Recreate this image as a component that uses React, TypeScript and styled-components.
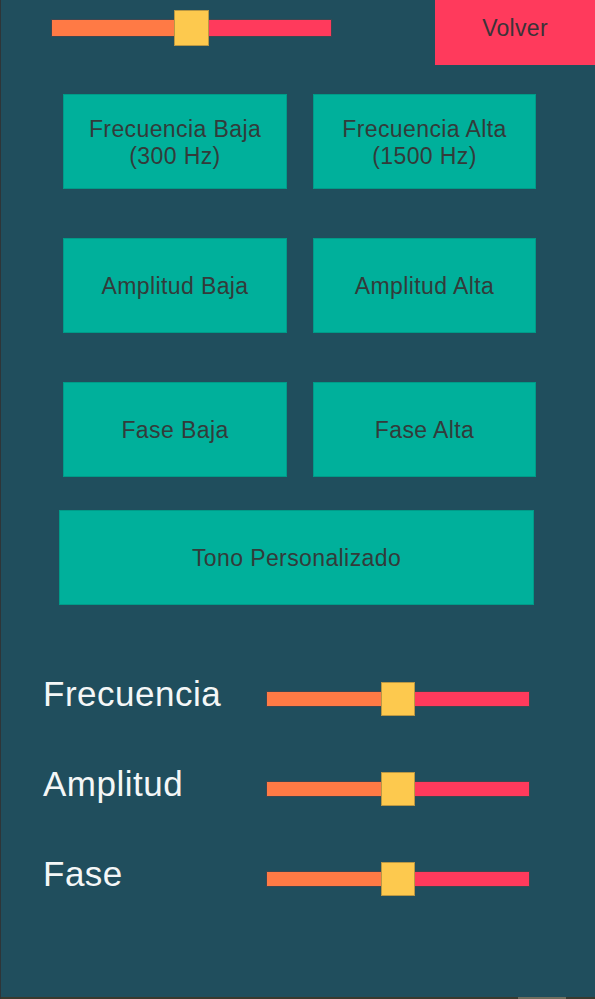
import React from "react";
import styled, { createGlobalStyle } from "styled-components";

const GlobalStyle = createGlobalStyle`
  html, body {
    margin: 0;
    padding: 0;
    background: #204e5d;
  }
  * { box-sizing: border-box; }
`;

const Screen = styled.div`
  width: 595px;
  height: 999px;
  display: flex;
  flex-direction: column;
  background: #204e5d;
  border-left: 1px solid #2e3538;
  font-family: "Liberation Sans", Arial, sans-serif;
  overflow: hidden;
`;

const TopBar = styled.div`
  display: flex;
  justify-content: space-between;
  align-items: flex-start;
  height: 65px;
`;

const TopSliderArea = styled.div`
  padding: 10px 0 0 50px;
`;

const BackButton = styled.button`
  width: 160px;
  height: 65px;
  border: none;
  margin: 0;
  background: #ff3a5c;
  color: #3b3338;
  font-family: "Liberation Sans", Arial, sans-serif;
  font-size: 23px;
  letter-spacing: 0.3px;
  padding: 0 0 8px 0;
  display: flex;
  align-items: center;
  justify-content: center;
`;

const SliderBox = styled.div<{ $w: number; $h: number }>`
  position: relative;
  width: ${(p) => p.$w}px;
  height: ${(p) => p.$h}px;
  display: flex;
  align-items: center;
`;

const Track = styled.div<{ $th: number }>`
  width: 100%;
  height: ${(p) => p.$th}px;
  display: flex;
  border: 1px solid rgba(120, 60, 60, 0.35);
`;

const Fill = styled.div`
  background: #ff7a45;
`;

const Rest = styled.div`
  flex: 1;
  background: #ff3a5c;
`;

const Handle = styled.div<{ $hw: number }>`
  position: absolute;
  top: 0;
  bottom: 0;
  width: ${(p) => p.$hw}px;
  background: #fdc94e;
  border: 1px solid rgba(130, 110, 60, 0.55);
`;

type SliderProps = { width: number; height: number; trackHeight: number; handleWidth: number; value: number };

const Slider = ({ width, height, trackHeight, handleWidth, value }: SliderProps) => {
  const center = width * value;
  return (
    <SliderBox $w={width} $h={height}>
      <Track $th={trackHeight}>
        <Fill style={{ width: `${value * 100}%` }} />
        <Rest />
      </Track>
      <Handle $hw={handleWidth} style={{ left: `${center - handleWidth / 2}px` }} />
    </SliderBox>
  );
};

const ButtonGrid = styled.div`
  margin: 29px 0 0 62px;
  display: grid;
  grid-template-columns: 224px 223px;
  grid-auto-rows: 95px;
  column-gap: 26px;
  row-gap: 49px;
`;

const ToneButton = styled.button<{ $wide?: boolean }>`
  margin: 0;
  padding: 2px 0 0 0;
  width: ${(p) => (p.$wide ? "475px" : "100%")};
  height: 95px;
  background: #00b09b;
  border: 1px solid rgba(0, 90, 80, 0.25);
  color: #333b3a;
  font-family: "Liberation Sans", Arial, sans-serif;
  font-size: 23px;
  letter-spacing: 0.4px;
  line-height: 27px;
  text-align: center;
  display: flex;
  align-items: center;
  justify-content: center;
`;

const WideRow = styled.div`
  margin: 33px 0 0 58px;
`;

const Controls = styled.div`
  flex: 1;
  display: flex;
  flex-direction: column;
  gap: 56px;
  padding: 72px 0 0 42px;
`;

const ControlRow = styled.div`
  display: grid;
  grid-template-columns: 223px 264px;
  align-items: center;
  height: 34px;
`;

const ControlLabel = styled.span`
  color: #f4f7f7;
  font-size: 35px;
  line-height: 34px;
  letter-spacing: 0.5px;
  margin-bottom: 9px;
`;

const BottomEdge = styled.div`
  height: 2px;
  background: #3a3a2e;
  display: flex;
`;

const EdgeThumb = styled.div`
  margin-left: 517px;
  width: 48px;
  background: #706d5d;
`;

export default function App() {
  const buttons = [
    ["Frecuencia Baja", "(300 Hz)"],
    ["Frecuencia Alta", "(1500 Hz)"],
    ["Amplitud Baja"],
    ["Amplitud Alta"],
    ["Fase Baja"],
    ["Fase Alta"],
  ];
  const controls = ["Frecuencia", "Amplitud", "Fase"];
  return (
    <>
      <GlobalStyle />
      <Screen>
        <TopBar>
          <TopSliderArea>
            <Slider width={281} height={36} trackHeight={18} handleWidth={35} value={0.5} />
          </TopSliderArea>
          <BackButton>Volver</BackButton>
        </TopBar>
        <ButtonGrid>
          {buttons.map((lines) => (
            <ToneButton key={lines.join(" ")}>
              {lines.map((l, i) => (
                <React.Fragment key={l}>
                  {i > 0 && <br />}
                  {l}
                </React.Fragment>
              ))}
            </ToneButton>
          ))}
        </ButtonGrid>
        <WideRow>
          <ToneButton $wide>Tono Personalizado</ToneButton>
        </WideRow>
        <Controls>
          {controls.map((c) => (
            <ControlRow key={c}>
              <ControlLabel>{c}</ControlLabel>
              <Slider width={264} height={34} trackHeight={16} handleWidth={34} value={0.5} />
            </ControlRow>
          ))}
        </Controls>
        <BottomEdge>
          <EdgeThumb />
        </BottomEdge>
      </Screen>
    </>
  );
}
